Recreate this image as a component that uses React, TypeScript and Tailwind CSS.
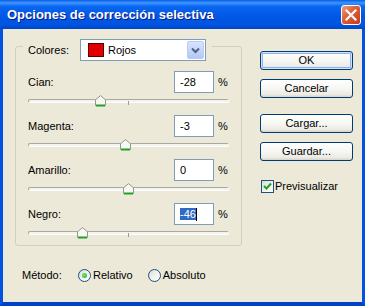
import React from 'react';

const rows = [
    { label: 'Cian:', value: -28 },
    { label: 'Magenta:', value: -3 },
    { label: 'Amarillo:', value: 0 },
    { label: 'Negro:', value: -46, selected: true },
];

function Thumb() {
    return (
        <svg width="11" height="12" viewBox="0 0 11 12">
            <path d="M0.5 10.5 V4.8 L5.5 0.6 L10.5 4.8 V10.5 Z" fill="#F7F7F4" stroke="#8E9A8E" />
            <rect x="1" y="9.5" width="9" height="2" fill="#21A121" />
        </svg>
    );
}

function Slider({ value }: { value: number }) {
    // range -100..100 over a 200px track
    return (
        <div className="relative mt-[2px] flex h-[12px] items-center">
            <div className="h-[4px] w-full rounded-[2px] border border-[#A9A8A3] border-b-white border-r-white bg-[#F4F3EE]" />
            <div className="absolute left-[100px] top-[6px] h-[4px] w-px bg-[#9C9B96]" />
            <div className="absolute top-0" style={{ left: value + 100 - 5 }}>
                <Thumb />
            </div>
        </div>
    );
}

function XPButton({ children, primary }: { children: React.ReactNode; primary?: boolean }) {
    return (
        <div
            className={
                'flex h-[19px] w-[93px] items-center justify-center rounded-[3px] border border-[#003C74] bg-[linear-gradient(180deg,#FFFFFF_0%,#F5F5F1_55%,#ECEBE6_85%,#D8D2C6_100%)] ' +
                (primary ? 'shadow-[inset_0_0_0_1px_#CDE4FF,inset_0_0_0_2px_#8EB2EA]' : '')
            }
        >
            {children}
        </div>
    );
}

function Radio({ checked }: { checked?: boolean }) {
    return (
        <div className="flex h-[13px] w-[13px] items-center justify-center rounded-full border border-[#1C5180] bg-[linear-gradient(135deg,#DCDCD7_0%,#F4F4F1_60%,#FFFFFF_100%)]">
            {checked && <div className="h-[5px] w-[5px] rounded-full bg-[radial-gradient(circle_at_40%_40%,#7BE878,#21A121)]" />}
        </div>
    );
}

export default function App() {
    return (
        <div className="flex h-[306px] w-[365px] flex-col overflow-hidden bg-[#0054E3] font-['Liberation_Sans',Arial,sans-serif] text-[11px] text-black">
            {/* title bar */}
            <div className="flex h-[29px] shrink-0 items-center justify-between bg-[linear-gradient(180deg,#0A5CE8_0%,#3D95FF_10%,#0A66F0_22%,#0058E6_55%,#0054E0_85%,#0046C8_100%)] pl-[7px] pr-[4px]">
                <span className="text-[13px] font-bold text-white [text-shadow:1px_1px_#0A1883]">
                    Opciones de corrección selectiva
                </span>
                <div className="flex h-[20px] w-[20px] items-center justify-center rounded-[3px] border border-white bg-[linear-gradient(135deg,#F0A085_0%,#E0613C_40%,#C7391A_100%)]">
                    <svg width="12" height="12" viewBox="0 0 12 12">
                        <path d="M1.5 1.5 L10.5 10.5 M10.5 1.5 L1.5 10.5" stroke="white" strokeWidth="2.2" strokeLinecap="square" />
                    </svg>
                </div>
            </div>

            {/* client area */}
            <div className="flex flex-1 flex-col border-x-[3px] border-b-[4px] border-[#0352E2] border-b-[#0043C8] bg-[#ECE9D8]">
                <div className="flex pl-[12px] pt-[17px]">
                    <div className="flex w-[227px] flex-col">
                        {/* group box */}
                        <div className="flex flex-col rounded-[3px] border border-[#D0D0BF] pb-[6px]">
                            <div className="-mt-[8px] ml-[7px] flex w-fit items-center bg-[#ECE9D8] pl-[5px] pr-[6px]">
                                <span className="w-[52px]">Colores:</span>
                                <div className="flex h-[22px] w-[126px] items-center border border-[#7F9DB9] bg-white pl-[7px]">
                                    <div className="h-[14px] w-[16px] border border-[#5A0000] bg-[#E00000]" />
                                    <span className="ml-[4px]">Rojos</span>
                                    <div className="ml-auto mr-px flex h-[18px] w-[17px] items-center justify-center rounded-[2px] border border-[#B9CCF5] bg-[linear-gradient(180deg,#D8E4FD_0%,#C1D3FB_60%,#B3C8F5_100%)]">
                                        <svg width="9" height="7" viewBox="0 0 9 7">
                                            <path d="M1 1.5 L4.5 5 L8 1.5" fill="none" stroke="#4D6185" strokeWidth="2" />
                                        </svg>
                                    </div>
                                </div>
                            </div>

                            <div className="mt-[10px] flex flex-col px-[12px]">
                                {rows.map((r, i) => (
                                    <div key={r.label} className={i > 0 ? 'mt-[8px]' : ''}>
                                        <div className="flex h-[22px] items-center">
                                            <span className="flex-1">{r.label}</span>
                                            <div className="flex h-[22px] w-[40px] items-center border border-[#7F9DB9] bg-white pl-[5px]">
                                                {r.selected ? (
                                                    <>
                                                        <span className="bg-[#316AC5] leading-[12px] text-white">{r.value}</span>
                                                        <span className="h-[13px] w-px bg-black" />
                                                    </>
                                                ) : (
                                                    <span>{r.value}</span>
                                                )}
                                            </div>
                                            <span className="w-[15px] pl-[4px]">%</span>
                                        </div>
                                        <Slider value={r.value} />
                                    </div>
                                ))}
                            </div>
                        </div>

                        {/* método */}
                        <div className="ml-[7px] mt-[19px] flex h-[20px] items-center">
                            <span className="w-[56px]">Método:</span>
                            <Radio checked />
                            <span className="ml-[2px]">Relativo</span>
                            <div className="ml-[15px]">
                                <Radio />
                            </div>
                            <span className="ml-[2px]">Absoluto</span>
                        </div>
                    </div>

                    {/* buttons */}
                    <div className="ml-[18px] flex flex-col pt-[5px]">
                        <XPButton primary>OK</XPButton>
                        <div className="mt-[9px]">
                            <XPButton>Cancelar</XPButton>
                        </div>
                        <div className="mt-[16px]">
                            <XPButton>Cargar...</XPButton>
                        </div>
                        <div className="mt-[9px]">
                            <XPButton>Guardar...</XPButton>
                        </div>
                        <div className="ml-px mt-[17px] flex items-center">
                            <div className="flex h-[13px] w-[13px] items-center justify-center border border-[#1C5180] bg-[linear-gradient(135deg,#DCDCD7_0%,#F4F4F1_60%,#FFFFFF_100%)]">
                                <svg width="9" height="9" viewBox="0 0 9 9">
                                    <path d="M1 4 L3.5 6.5 L8 1.5" fill="none" stroke="#21A121" strokeWidth="2" />
                                </svg>
                            </div>
                            <span className="ml-[1px]">Previsualizar</span>
                        </div>
                    </div>
                </div>
            </div>
        </div>
    );
}
